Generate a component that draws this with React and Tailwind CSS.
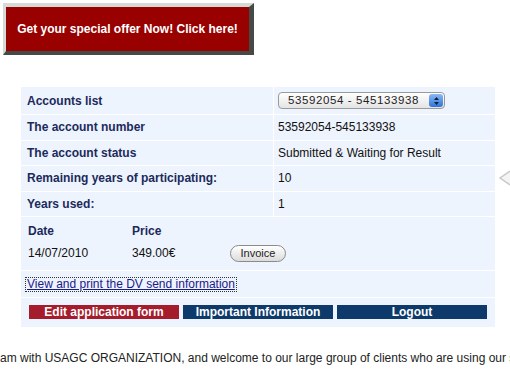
export default function App() {
    const rows = [
        ["The account number", "53592054-545133938"],
        ["The account status", "Submitted & Waiting for Result"],
        ["Remaining years of participating:", "10"],
        ["Years used:", "1"],
    ];

    return (
        <div className="relative h-[385px] w-[510px] overflow-hidden bg-white font-['Liberation_Sans',Arial,sans-serif]">
            <div className="pl-[3px] pt-[3px]">
                <div className="w-[251px] border-t-[4px] border-l-[3px] border-b-[4px] border-r-[5px] border-t-[#d5dad6] border-l-[#d5dad6] border-b-[#454a47] border-r-[#454a47] bg-[#990000] py-[13px] text-center text-[12px] font-bold text-white">
                    Get your special offer Now! Click here!
                </div>
            </div>

            <div className="ml-[21px] mt-[32px] w-[474px] bg-[#eef4fd] text-[12px]">
                <div className="flex h-[28px] items-center border-b border-white">
                    <div className="w-[252px] pl-[6px] font-bold text-[#1b2a5c]">Accounts list</div>
                    <div className="flex h-full flex-1 items-center border-l border-white pl-[4px]">
                        <div className="flex h-[17px] w-[167px] items-center justify-between rounded-[4px] border border-[#9a9a9a] bg-gradient-to-b from-white to-[#e4e4e4] pl-[9px] pr-[1px] text-[11.5px] tracking-[0.6px] text-[#222] shadow-[inset_0_1px_0_#fff]">
                            <span>53592054 - 545133938</span>
                            <span className="flex h-[13px] w-[14px] flex-col items-center justify-center rounded-[3px] bg-gradient-to-b from-[#8ab8f2] to-[#2f74d8]">
                                <svg width="7" height="10" viewBox="0 0 7 10">
                                    <path d="M3.5 1 L6 4 L1 4 Z M3.5 9 L6 6 L1 6 Z" fill="#0d1f3c" />
                                </svg>
                            </span>
                        </div>
                    </div>
                </div>
                {rows.map(([label, value]) => (
                    <div key={label} className="flex h-[25.5px] items-center border-b border-white">
                        <div className="w-[252px] pl-[6px] font-bold text-[#1b2a5c]">{label}</div>
                        <div className="flex h-full flex-1 items-center border-l border-white pl-[4px] text-[#111]">
                            {value}
                        </div>
                    </div>
                ))}
                <div className="border-b border-white pb-[7px] pt-[6px]">
                    <div className="flex h-[16px] items-center font-bold text-[#1b2a5c]">
                        <div className="w-[111px] pl-[7px]">Date</div>
                        <div>Price</div>
                    </div>
                    <div className="mt-[4px] flex h-[20px] items-center text-[#111]">
                        <div className="w-[111px] pl-[7px]">14/07/2010</div>
                        <div className="w-[98px]">349.00€</div>
                        <div className="flex h-[17px] w-[56px] items-center justify-center rounded-full border border-[#8a8a8a] bg-gradient-to-b from-white to-[#dcdcdc] text-[11px] text-[#222]">
                            Invoice
                        </div>
                    </div>
                </div>
                <div className="flex h-[27px] items-center border-b border-white pl-[4px]">
                    <span className="border border-dotted border-[#333] px-[1px] leading-[13px] text-[#1a1a8a] underline">
                        View and print the DV send information
                    </span>
                </div>
                <div className="flex gap-[4px] pb-[8px] pl-[8px] pt-[7px] text-[12px] font-bold text-white">
                    <div className="w-[150px] bg-[#a51c2c] text-center leading-[14px]">Edit application form</div>
                    <div className="w-[150px] bg-[#0d3a6a] text-center leading-[14px]">Important Information</div>
                    <div className="w-[150px] bg-[#0d3a6a] text-center leading-[14px]">Logout</div>
                </div>
            </div>

            <p className="mt-[22px] whitespace-nowrap text-[12px] text-[#222]">
                am with USAGC ORGANIZATION, and welcome to our large group of clients who are using our services.
            </p>

            <svg className="absolute left-[498px] top-[170px]" width="12" height="16" viewBox="0 0 12 16">
                <path d="M12 1 L2 8 L12 15" fill="#f4f4f4" stroke="#c8c8c8" strokeWidth="1.5" />
            </svg>
        </div>
    );
}
